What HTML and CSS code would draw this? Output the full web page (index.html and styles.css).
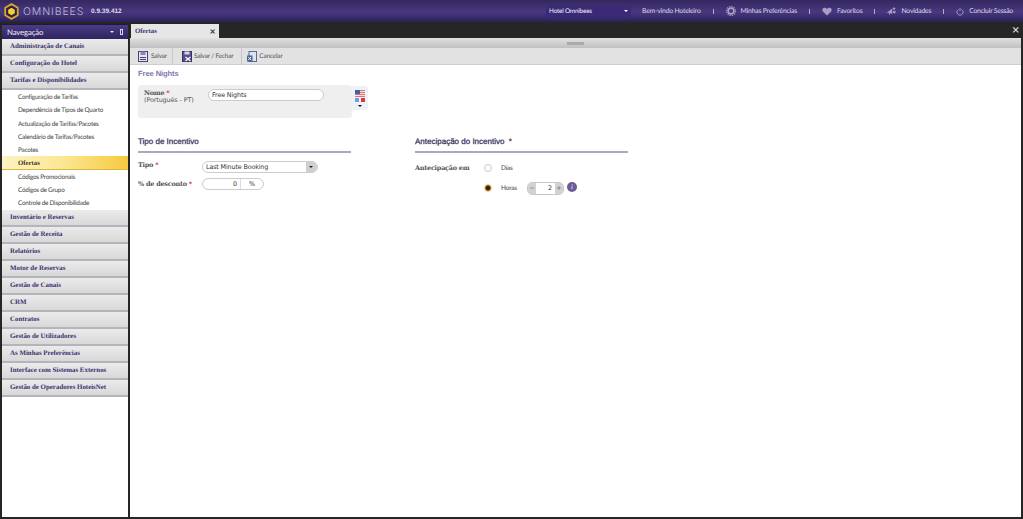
FILE: index.html
```html
<!DOCTYPE html>
<html lang="pt">
<head>
    <meta charset="UTF-8">
    <title>Omnibees</title>
    <link rel="stylesheet" href="styles.css">
</head>
<body>
    <header class="top-bar">
        <div class="brand">
            <svg class="brand-logo" width="15" height="17" viewBox="0 0 18 20">
                <path d="M9 1.2 L16.5 5.5 V14.5 L9 18.8 L1.5 14.5 V5.5 Z" fill="#2a1f4c" stroke="#d3aa2b" stroke-width="2.2" stroke-linejoin="round"/>
                <path d="M9 5.6 L13 8 V12 L9 14.4 L5 12 V8 Z" fill="#f4d02f"/>
            </svg>
            <span class="brand-name">OMNIBEES</span>
            <span class="brand-version">0.9.39.412</span>
        </div>
        <div class="top-links">
            <div class="hotel-select"><span>Hotel Omnibees</span><i class="hotel-arrow"></i></div>
            <a class="top-link">Bem-vindo Hoteleiro</a>
            <i class="top-sep"></i>
            <a class="top-link">
                <svg width="10" height="10" viewBox="0 0 12 12"><circle cx="6" cy="6" r="3.4" fill="none" stroke="#a99fc4" stroke-width="2"/><circle cx="6" cy="6" r="5.4" fill="none" stroke="#a99fc4" stroke-width="1.3" stroke-dasharray="1.6 1.2"/></svg>
                Minhas Preferências
            </a>
            <i class="top-sep"></i>
            <a class="top-link">
                <svg width="10" height="9" viewBox="0 0 12 11"><path d="M6 10.5 L1 5.5 C-0.5 3.5 0.5 0.8 3 0.8 C4.4 0.8 5.4 1.5 6 2.6 C6.6 1.5 7.6 0.8 9 0.8 C11.5 0.8 12.5 3.5 11 5.5 Z" fill="#a99fc4"/></svg>
                Favoritos
            </a>
            <i class="top-sep"></i>
            <a class="top-link">
                <svg width="9" height="10" viewBox="0 0 12 12"><path d="M0.5 7.5 L7 2.5 V10 L4.5 8.6 L3.6 11 L2.4 10.4 L3 8.2 L0.5 8.6 Z" fill="#a99fc4"/><circle cx="9.4" cy="2.8" r="1.6" fill="#a99fc4"/><circle cx="9.8" cy="7.4" r="1.8" fill="#a99fc4"/></svg>
                Novidades
            </a>
            <i class="top-sep"></i>
            <a class="top-link">
                <svg width="8" height="9" viewBox="0 0 12 12"><path d="M3.4 3 A4.6 4.6 0 1 0 8.6 3" fill="none" stroke="#a99fc4" stroke-width="1.4"/><path d="M6 0.8 V5.4" stroke="#a99fc4" stroke-width="1.4"/></svg>
                Concluir Sessão
            </a>
        </div>
    </header>

    <div class="workspace">
        <aside class="sidebar">
            <div class="sidebar-head">
                <span>Navegação</span>
                <span class="sidebar-tools"><i class="arrow-down"></i><i class="pin"></i></span>
            </div>
            <div class="acc-item">Administração de Canais</div>
            <div class="acc-item">Configuração do Hotel</div>
            <div class="acc-item">Tarifas e Disponibilidades</div>
            <ul class="sub-menu">
                <li>Configuração de Tarifas</li>
                <li>Dependência de Tipos de Quarto</li>
                <li>Actualização de Tarifas/Pacotes</li>
                <li>Calendário de Tarifas/Pacotes</li>
                <li>Pacotes</li>
                <li class="active">Ofertas</li>
                <li>Códigos Promocionais</li>
                <li>Códigos de Grupo</li>
                <li>Controle de Disponibilidade</li>
            </ul>
            <div class="acc-item">Inventário e Reservas</div>
            <div class="acc-item">Gestão de Receita</div>
            <div class="acc-item">Relatórios</div>
            <div class="acc-item">Motor de Reservas</div>
            <div class="acc-item">Gestão de Canais</div>
            <div class="acc-item">CRM</div>
            <div class="acc-item">Contratos</div>
            <div class="acc-item">Gestão de Utilizadores</div>
            <div class="acc-item">As Minhas Preferências</div>
            <div class="acc-item">Interface com Sistemas Externos</div>
            <div class="acc-item">Gestão de Operadores HoteisNet</div>
        </aside>

        <main class="main">
            <div class="tab-strip">
                <div class="tab"><span>Ofertas</span><span class="tab-close">×</span></div>
                <span class="strip-close">×</span>
            </div>
            <div class="splitter"><i class="grip"></i></div>
            <div class="toolbar">
                <button class="tool-btn tool-save">
                    <svg width="10" height="11" viewBox="0 0 10 11"><rect x="0.5" y="0.5" width="9" height="10" fill="#e8e6ef" stroke="#4a3f78"/><rect x="2.5" y="0.5" width="5" height="3.5" fill="#8d84b0"/><rect x="2" y="6" width="6" height="1" fill="#4a3f78"/><rect x="2" y="8" width="6" height="1" fill="#4a3f78"/></svg>
                    Salvar
                </button>
                <button class="tool-btn tool-close">
                    <svg width="10" height="11" viewBox="0 0 10 11"><rect x="0.5" y="0.5" width="9" height="10" fill="#5a4f8c" stroke="#3a2f68"/><rect x="2.5" y="0.5" width="5" height="3" fill="#d8d5e5"/><path d="M3.5 6 L8.5 10 M8.5 6 L3.5 10" stroke="#fff" stroke-width="1.2"/></svg>
                    Salvar / Fechar
                </button>
                <button class="tool-btn tool-cancel">
                    <svg width="10" height="11" viewBox="0 0 10 11"><rect x="2" y="0.5" width="7.5" height="10" fill="#dfe4ee" stroke="#5a6b90"/><rect x="0" y="4.5" width="5.5" height="6" fill="#3f5f95"/><path d="M1.2 5.8 L4.2 9.2 M4.2 5.8 L1.2 9.2" stroke="#fff"/></svg>
                    Cancelar
                </button>
            </div>

            <div class="content">
                <h2 class="page-title">Free Nights</h2>
                <div class="name-row">
                    <div class="name-panel">
                        <div class="name-label">
                            <div class="field-label">Nome <em>*</em></div>
                            <div class="lang-label">(Português - PT)</div>
                        </div>
                        <input class="text-input" type="text" value="Free Nights">
                    </div>
                    <div class="flag-panel">
                        <svg width="10" height="7" viewBox="0 0 10 7"><rect width="10" height="7" fill="#d9747a"/><rect y="1" width="10" height="1" fill="#f3e4e6"/><rect y="3" width="10" height="1" fill="#f3e4e6"/><rect y="5" width="10" height="1" fill="#f3e4e6"/><rect width="5" height="4" fill="#4a5fa0"/></svg>
                        <svg width="10" height="4" viewBox="0 0 10 4"><rect x="0" width="4" height="4" fill="#6f9fd8"/><rect x="6" width="4" height="4" fill="#d93a3a"/></svg>
                        <i class="arrow-black"></i>
                    </div>
                </div>

                <div class="form-cols">
                    <section class="form-col">
                        <h3 class="section-title">Tipo de Incentivo</h3>
                        <div class="form-row row-type">
                            <label class="field-label type-label">Tipo <em>*</em></label>
                            <div class="combo"><span>Last Minute Booking</span><i class="combo-btn"></i></div>
                        </div>
                        <div class="form-row">
                            <label class="field-label type-label">% de desconto <em>*</em></label>
                            <div class="percent"><span class="percent-val">0</span><span class="percent-sign">%</span></div>
                        </div>
                    </section>
                    <section class="form-col">
                        <h3 class="section-title">Antecipação do Incentivo <em>*</em></h3>
                        <div class="radio-block">
                            <div class="field-label anticip-label">Antecipação em</div>
                            <div class="radio-list">
                                <div class="radio-row"><i class="radio"></i><span class="radio-text">Dias</span></div>
                                <div class="radio-row">
                                    <i class="radio checked"></i><span class="radio-text">Horas</span>
                                    <div class="spinner"><i class="spin-btn">−</i><span class="spin-val">2</span><i class="spin-btn">+</i></div>
                                    <i class="info-dot">i</i>
                                </div>
                            </div>
                        </div>
                    </section>
                </div>
            </div>
        </main>
    </div>
</body>
</html>
```

FILE: styles.css
```css
* {
    margin: 0;
    padding: 0;
    box-sizing: border-box;
}

html, body {
    height: 100%;
    overflow: hidden;
}

body {
    background: #262626;
    font-family: "Lato", "Liberation Sans", sans-serif;
    text-rendering: geometricPrecision;
    display: flex;
    flex-direction: column;
}

input, button {
    text-rendering: geometricPrecision;
}

i {
    font-style: normal;
    display: block;
}

/* top bar */
.top-bar {
    height: 22px;
    flex: none;
    display: flex;
    justify-content: space-between;
    background: linear-gradient(#35285f, #483880 55%, #2c2158);
    color: #e4e0ee;
}

.brand {
    display: flex;
    align-items: center;
    padding-left: 4px;
}

.brand-name {
    font-family: "Inter", "Liberation Sans", sans-serif;
    font-size: 10.5px;
    font-weight: 300;
    letter-spacing: 0.9px;
    color: #bdb9cf;
    margin-left: 4px;
    width: 64px;
}

.brand-version {
    font-family: "Liberation Sans", sans-serif;
    font-size: 6.5px;
    font-weight: bold;
    margin-left: 4px;
    color: #dcd9e6;
}

.top-links {
    display: flex;
    align-items: center;
    padding-right: 10px;
}

.hotel-select {
    width: 85px;
    height: 11px;
    margin-right: 11px;
    padding: 0 3px;
    display: flex;
    align-items: center;
    justify-content: space-between;
    background: #3b2a78;
    color: #f2f0f8;
    font-size: 6.4px;
    letter-spacing: -0.2px;
}

.hotel-arrow {
    border: 2px solid transparent;
    border-top-color: #fff;
    margin-top: 2px;
}

.top-link {
    display: flex;
    align-items: center;
    gap: 5px;
    font-size: 6.8px;
    letter-spacing: -0.2px;
    color: #dcd8e8;
}

.top-sep {
    width: 1px;
    height: 5px;
    background: #b5aecb;
    margin: 0 12px;
}

/* layout below the top bar */
.workspace {
    flex: 1;
    display: flex;
    gap: 2px;
    padding: 2px;
    min-height: 0;
}

/* sidebar */
.sidebar {
    width: 126px;
    flex: none;
    background: #fff;
}

.sidebar-head {
    height: 15px;
    display: flex;
    justify-content: space-between;
    align-items: center;
    padding: 0 5px;
    background: linear-gradient(#4b3b85, #2f2460);
    color: #eeecf5;
    font-size: 7.8px;
    letter-spacing: -0.15px;
    border-top: 1px solid #201844;
}

.sidebar-tools {
    display: flex;
    align-items: center;
    gap: 6px;
}

.arrow-down {
    border: 2px solid transparent;
    border-top-color: #e8e6f0;
    margin-top: 2px;
}

.pin {
    width: 3px;
    height: 6px;
    border: 1px solid #d8d5e5;
}

.acc-item {
    height: 17px;
    padding: 0 0 1px 8px;
    display: flex;
    align-items: center;
    font-family: "Liberation Serif", serif;
    font-weight: bold;
    font-size: 6.9px;
    color: #3c3070;
    background: linear-gradient(#ebebeb, #d8d8d8);
    border-bottom: 2px solid #b4b4bc;
}

.sub-menu {
    list-style: none;
    height: 120px;
}

.sub-menu li {
    height: 13.3px;
    line-height: 15px;
    padding-left: 16px;
    font-size: 6.4px;
    letter-spacing: -0.25px;
    color: #444;
}

.sub-menu li.active {
    background: linear-gradient(90deg, #fdf3c4, #fbe690 50%, #f7c93f);
    border-bottom: 1px solid #e2b53a;
    font-family: "Liberation Serif", serif;
    font-weight: bold;
    font-size: 6.8px;
    letter-spacing: 0;
    color: #40381a;
}

/* main area */
.main {
    flex: 1;
    min-width: 0;
    display: flex;
    flex-direction: column;
    background: #fff;
}

.tab-strip {
    height: 14px;
    flex: none;
    display: flex;
    justify-content: space-between;
    align-items: flex-start;
    background: #262626;
}

.tab {
    width: 88px;
    height: 14px;
    margin-left: 1px;
    padding: 0 3px 0 4px;
    display: flex;
    justify-content: space-between;
    align-items: center;
    background: #e6e6e6;
    font-family: "Liberation Serif", serif;
    font-weight: bold;
    font-size: 6.8px;
    color: #3c3070;
}

.tab-close {
    font-family: "DejaVu Sans", sans-serif;
    font-size: 8px;
    color: #333;
}

.strip-close {
    font-family: "DejaVu Sans", sans-serif;
    font-size: 10px;
    line-height: 13px;
    color: #eee;
    padding-right: 1px;
}

.splitter {
    height: 10px;
    flex: none;
    display: flex;
    justify-content: center;
    align-items: center;
    background: linear-gradient(#e0e0e0, #c0c0c0);
}

.grip {
    width: 17px;
    height: 3px;
    margin-left: -1px;
    background: #a9a9a9;
}

.toolbar {
    height: 17px;
    flex: none;
    display: flex;
    align-items: center;
    padding-left: 2px;
    background: #e2e2e2;
    border-bottom: 1px solid #cfcfcf;
}

.tool-btn {
    height: 100%;
    display: flex;
    align-items: center;
    gap: 2px;
    background: none;
    border: 0;
    border-right: 1px solid #c8c8c8;
    font-family: "Lato", "Liberation Sans", sans-serif;
    font-size: 6.5px;
    letter-spacing: -0.2px;
    color: #555;
}

.tool-save {
    gap: 3px;
    padding: 0 5px 0 6px;
}

.tool-close {
    padding: 0 8px 0 9px;
}

.tool-cancel {
    padding-left: 5px;
    border-right: 0;
}

.content {
    flex: 1;
    padding: 4px 8px 0;
}

.page-title {
    font-family: "Liberation Sans", sans-serif;
    font-weight: bold;
    font-size: 7.6px;
    letter-spacing: -0.1px;
    line-height: 10px;
    color: #8478ae;
}

.name-row {
    display: flex;
    margin-top: 6px;
    align-items: flex-start;
}

.name-panel {
    width: 214px;
    height: 33px;
    display: flex;
    align-items: flex-start;
    padding: 4px 6px;
    background: #efefef;
    border-radius: 3px;
}

.name-label {
    width: 64px;
    flex: none;
}

.field-label {
    font-family: "DejaVu Serif", serif;
    font-weight: bold;
    font-size: 6.5px;
    letter-spacing: -0.25px;
    line-height: 8px;
    color: #555;
}

.field-label em, .section-title em {
    font-style: normal;
    color: #d8232a;
}

.section-title em {
    margin-left: 2px;
}

.lang-label {
    font-family: "DejaVu Sans", sans-serif;
    font-size: 6.4px;
    letter-spacing: -0.1px;
    line-height: 7px;
    color: #555;
}

.text-input {
    width: 116px;
    height: 12px;
    padding: 0 3px;
    border: 1px solid #ccc;
    border-radius: 6px;
    background: #fff;
    font-family: "DejaVu Sans", sans-serif;
    font-size: 6.4px;
    letter-spacing: -0.15px;
    color: #333;
}

.flag-panel {
    width: 16px;
    height: 24px;
    margin-top: 1px;
    padding-top: 4px;
    display: flex;
    flex-direction: column;
    align-items: center;
    gap: 1px;
    background: #eef1f6;
    border-radius: 0 3px 3px 0;
}

.arrow-black {
    border: 2px solid transparent;
    border-top-color: #111;
    margin-top: 2px;
}

.form-cols {
    display: flex;
    gap: 64px;
    margin-top: 18px;
}

.form-col {
    width: 213px;
}

.section-title {
    height: 17px;
    padding-bottom: 3px;
    font-family: "Liberation Sans", sans-serif;
    font-weight: normal;
    font-size: 8px;
    line-height: 12px;
    -webkit-text-stroke: 0.25px #35305a;
    color: #35305a;
    border-bottom: 2px solid #aaa9bb;
}

.form-row {
    display: flex;
    align-items: center;
}

.row-type {
    align-items: flex-start;
    margin-top: 8px;
    margin-bottom: 5px;
}

.type-label {
    width: 64px;
    flex: none;
}

.combo {
    width: 116px;
    height: 12px;
    display: flex;
    justify-content: space-between;
    align-items: center;
    padding-left: 3px;
    border: 1px solid #ccc;
    border-radius: 6px;
    font-family: "DejaVu Sans", sans-serif;
    font-size: 6.4px;
    letter-spacing: -0.15px;
    color: #333;
}

.combo-btn {
    width: 11px;
    height: 10px;
    background: #cfcfcf;
    border-radius: 0 5px 5px 0;
    position: relative;
}

.combo-btn::after {
    content: '';
    position: absolute;
    left: 3px;
    top: 4px;
    border: 2px solid transparent;
    border-top-color: #222;
}

.percent {
    width: 62px;
    height: 12px;
    display: flex;
    border: 1px solid #ccc;
    border-radius: 6px;
    font-family: "DejaVu Sans", sans-serif;
    font-size: 6.4px;
    line-height: 10px;
    color: #333;
}

.percent-val {
    width: 38px;
    text-align: right;
    padding-right: 3px;
    border-right: 1px solid #ddd;
}

.percent-sign {
    flex: 1;
    text-align: center;
}

.radio-block {
    display: flex;
    margin-top: 10px;
}

.anticip-label {
    width: 69px;
    flex: none;
    line-height: 10px;
}

.radio-list {
    display: flex;
    flex-direction: column;
    gap: 10px;
}

.radio-row {
    display: flex;
    align-items: center;
    height: 10px;
}

.radio {
    width: 8px;
    height: 8px;
    flex: none;
    border: 1px solid #ccc;
    border-radius: 50%;
    background: #fff;
}

.radio.checked {
    background: radial-gradient(#3a1f05 40%, #e8a23c 80%);
    border-color: #e6c88e;
}

.radio-text {
    font-size: 6.5px;
    letter-spacing: -0.2px;
    color: #444;
    width: 26px;
    margin-left: 9px;
}

.spinner {
    width: 37px;
    height: 13px;
    flex: none;
    display: flex;
    align-items: center;
    border: 1px solid #c8c8c8;
    border-radius: 5px;
    overflow: hidden;
    font-family: "DejaVu Sans", sans-serif;
    font-size: 6.4px;
    color: #333;
}

.spin-btn {
    width: 8px;
    height: 100%;
    line-height: 11px;
    text-align: center;
    background: #d2d2d2;
    color: #666;
}

.spin-val {
    flex: 1;
    text-align: right;
    padding-right: 3px;
}

.info-dot {
    width: 10px;
    height: 10px;
    flex: none;
    margin: 0 0 2px 3px;
    border-radius: 50%;
    background: #6b5b9a;
    color: #fff;
    font-family: "Liberation Serif", serif;
    font-style: italic;
    font-size: 7px;
    line-height: 10px;
    text-align: center;
}
```
